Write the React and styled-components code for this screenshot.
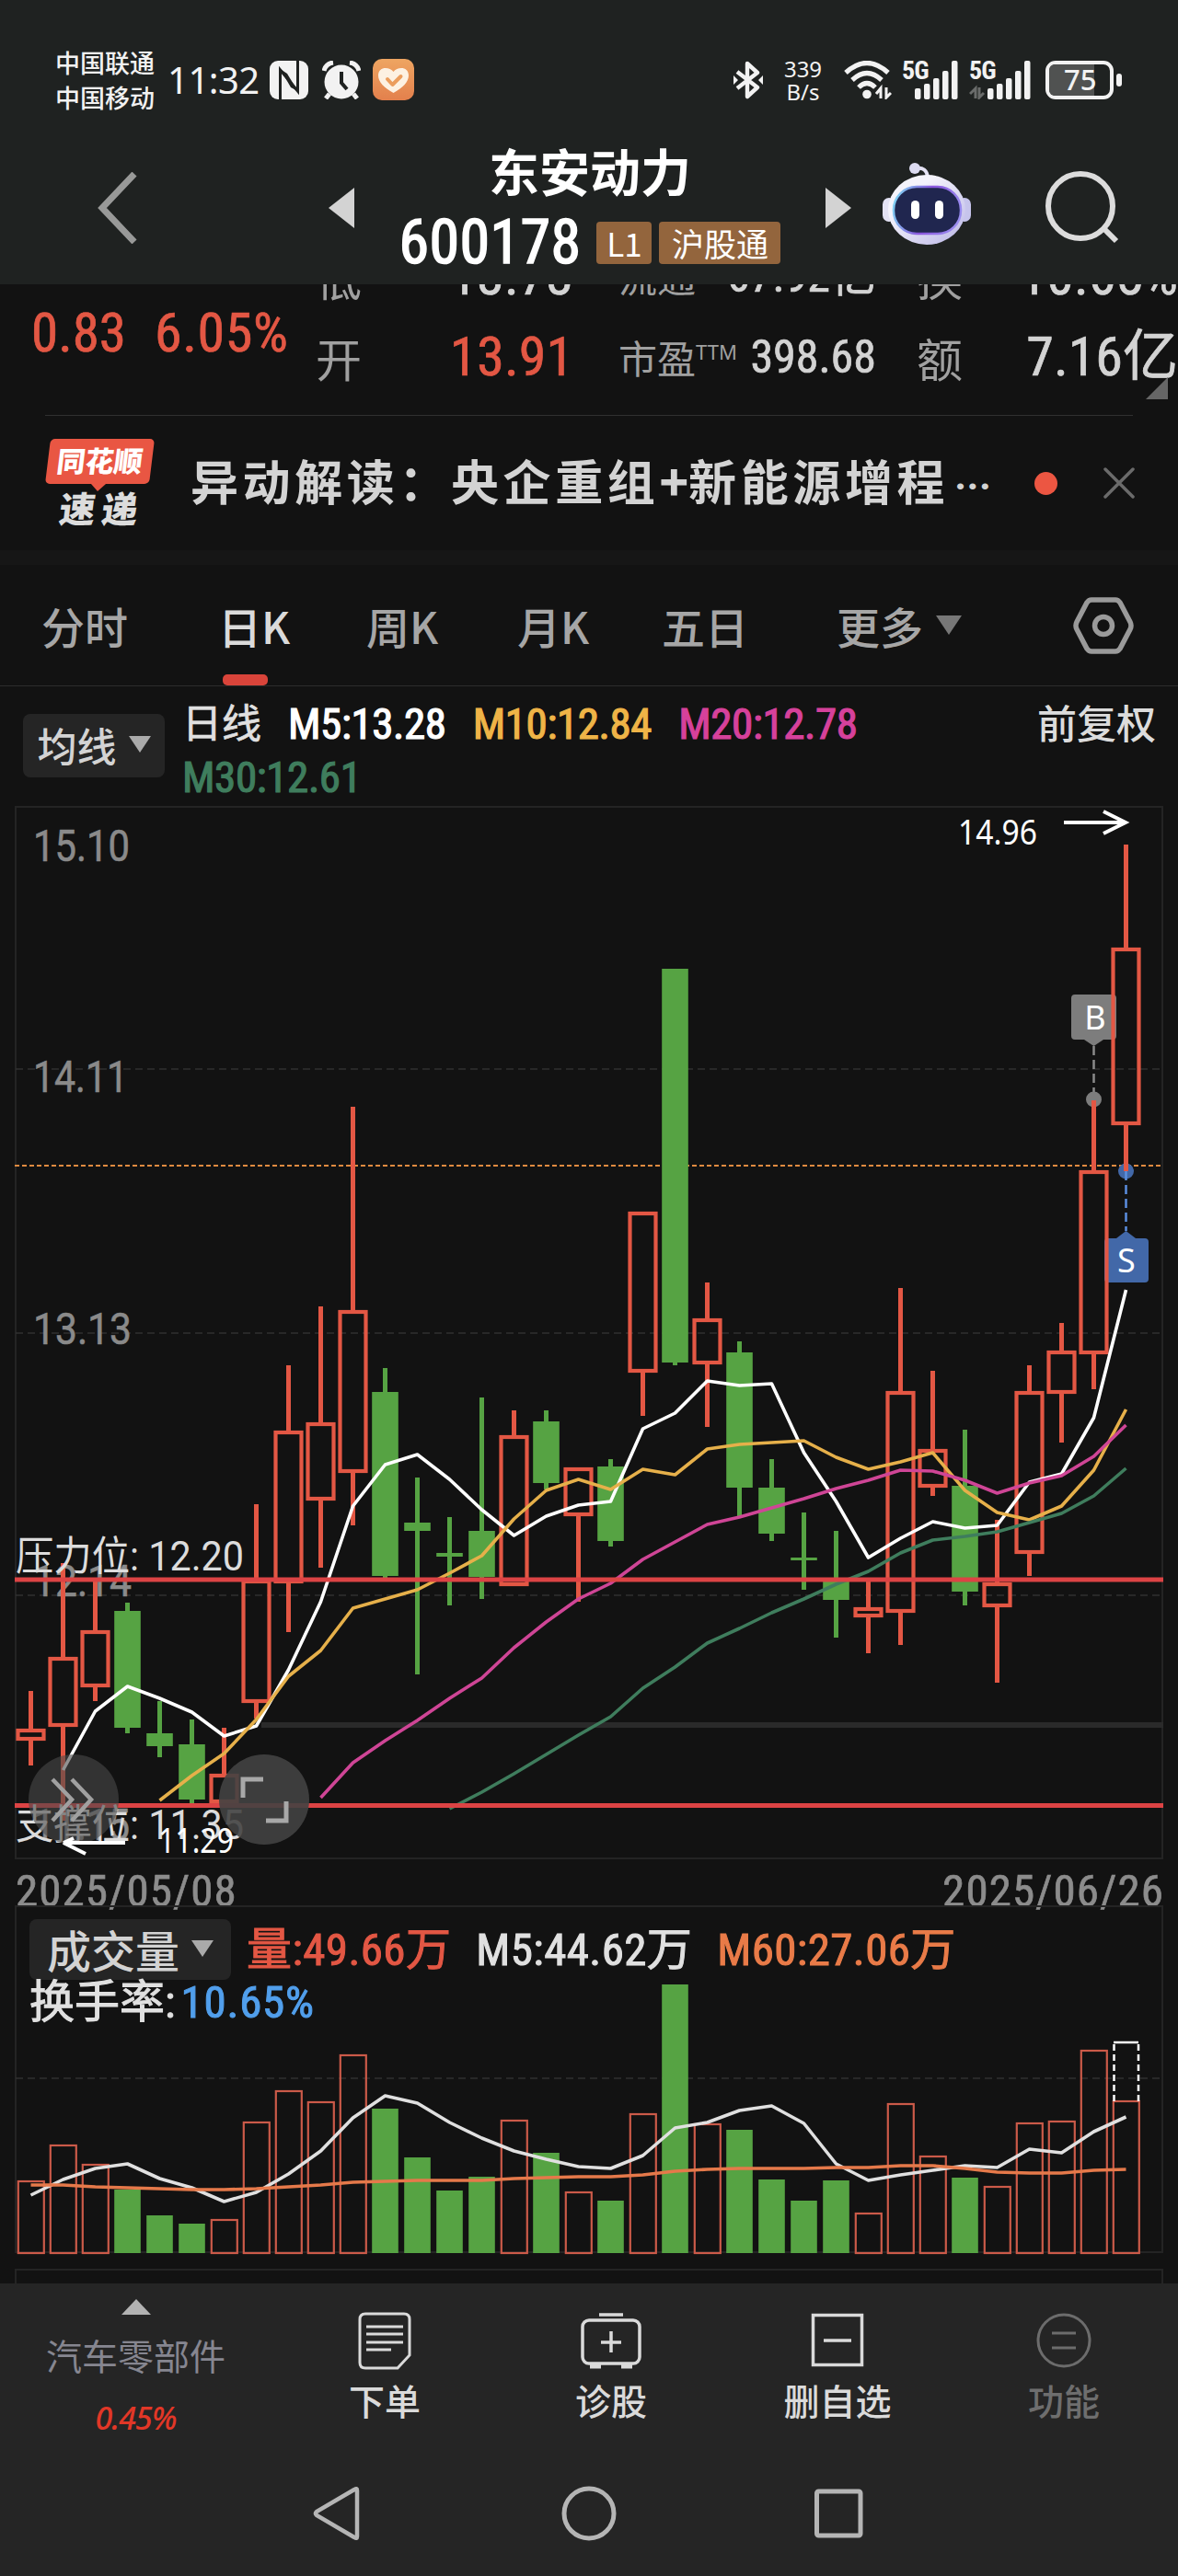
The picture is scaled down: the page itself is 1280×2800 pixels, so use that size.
import styled, { createGlobalStyle } from "styled-components"

const RED = "#e35744"
const GREEN = "#56a343"
const FIRST_X = 33.5
const STEP = 35

// [up, high, bodyTop, bodyBottom, low]
const candles = [
  [1, 1838, 1879, 1892, 1919],
  [1, 1699, 1801, 1877, 1979],
  [1, 1717, 1772, 1834, 1849],
  [0, 1742, 1751, 1878, 1884],
  [0, 1849, 1884, 1898, 1910],
  [0, 1869, 1896, 1956, 1961],
  [1, 1878, 1928, 1960, 1960],
  [1, 1635, 1717, 1851, 1868],
  [1, 1484, 1555, 1721, 1774],
  [1, 1420, 1546, 1631, 1704],
  [1, 1203, 1424, 1601, 1658],
  [0, 1487, 1513, 1713, 1715],
  [0, 1606, 1655, 1664, 1820],
  [0, 1649, 1688, 1692, 1745],
  [0, 1519, 1664, 1714, 1738],
  [1, 1533, 1560, 1724, 1724],
  [0, 1533, 1545, 1612, 1619],
  [1, 1595, 1595, 1648, 1741],
  [0, 1586, 1594, 1675, 1681],
  [1, 1317, 1317, 1492, 1539],
  [0, 1053, 1053, 1481, 1484],
  [1, 1394, 1433, 1483, 1551],
  [0, 1458, 1470, 1617, 1648],
  [0, 1586, 1617, 1667, 1675],
  [0, 1644, 1693, 1696, 1728],
  [0, 1664, 1718, 1739, 1780],
  [1, 1717, 1747, 1758, 1797],
  [1, 1400, 1512, 1753, 1788],
  [1, 1490, 1575, 1617, 1626],
  [0, 1554, 1615, 1730, 1745],
  [1, 1652, 1720, 1747, 1829],
  [1, 1484, 1512, 1689, 1713],
  [1, 1438, 1468, 1515, 1568],
  [1, 1196, 1272, 1472, 1510],
  [1, 918, 1030, 1223, 1273],
]

const ma5 = [1924, 1860, 1833, 1846, 1861, 1887, 1876, 1815, 1741, 1637, 1592, 1581, 1608, 1641, 1669, 1648, 1636, 1632, 1553, 1536, 1501, 1506, 1504, 1579, 1632, 1693, 1672, 1654, 1661, 1658, 1611, 1602, 1541, 1402]
const ma10 = [1957, 1930, 1906, 1869, 1822, 1794, 1748, 1738, 1728, 1710, 1691, 1651, 1620, 1608, 1619, 1597, 1603, 1575, 1570, 1568, 1566, 1584, 1597, 1589, 1579, 1620, 1644, 1652, 1637, 1598, 1532]
const ma20 = [1954, 1916, 1892, 1870, 1846, 1824, 1791, 1763, 1738, 1721, 1695, 1676, 1657, 1649, 1639, 1629, 1618, 1609, 1598, 1599, 1609, 1623, 1612, 1604, 1583, 1549]
const ma30 = [1966, 1948, 1928, 1907, 1886, 1866, 1835, 1812, 1786, 1770, 1753, 1738, 1722, 1708, 1688, 1674, 1670, 1665, 1655, 1645, 1626, 1596]

const volumes = [2370, 2331, 2352, 2380, 2408, 2417, 2412, 2306, 2272, 2284, 2233, 2292, 2345, 2381, 2366, 2304, 2340, 2382, 2392, 2297, 2157, 2308, 2315, 2369, 2392, 2370, 2405, 2286, 2343, 2367, 2376, 2307, 2305, 2228, 2283]
const vol5 = [2386, 2369, 2357, 2352, 2368, 2378, 2393, 2383, 2363, 2338, 2302, 2278, 2286, 2307, 2324, 2338, 2347, 2355, 2357, 2343, 2313, 2307, 2294, 2289, 2308, 2352, 2370, 2364, 2359, 2354, 2356, 2336, 2340, 2317, 2301]
const vol60 = [2375, 2375, 2377, 2378, 2379, 2380, 2380, 2379, 2377, 2375, 2372, 2371, 2370, 2370, 2370, 2368, 2367, 2366, 2366, 2364, 2360, 2358, 2357, 2357, 2357, 2356, 2356, 2354, 2354, 2357, 2361, 2362, 2362, 2359, 2358]

const xAt = (i) => FIRST_X + STEP * i
const linePoints = (values) =>
  values.map((y, i) => `${xAt(35 - values.length + i)},${y}`).join(" ")

function StatusBar() {
  return (
    <Status>
      <Carriers>
        <span>中国联通</span>
        <span>中国移动</span>
      </Carriers>
      <Clock>11:32</Clock>
      <svg width="42" height="42" viewBox="0 0 42 42">
        <rect width="42" height="42" rx="9" fill="#f2f2f2" />
        <path d="M11.500 42V10L30.500 33V0" fill="none" stroke="#1f2221" strokeWidth="3" />
        <path d="M11.500 9L19 14L30.500 33L23 29Z" fill="#1f2221" />
      </svg>
      <AlarmIcon width="42" height="42" viewBox="0 0 42 42">
        <circle cx="21" cy="23" r="18.500" fill="#f2f2f2" />
        <path d="M2 11Q4 3 12 2M40 11Q38 3 30 2" fill="none" stroke="#f2f2f2" strokeWidth="5" />
        <path d="M8 36L4 41M34 36L38 41" stroke="#f2f2f2" strokeWidth="5" />
        <path d="M21 12V24L27 31" fill="none" stroke="#1f2221" strokeWidth="4" />
      </AlarmIcon>
      <svg width="45" height="45" viewBox="0 0 45 45">
        <defs>
          <linearGradient id="heart" x1="0" y1="0" x2="0" y2="1">
            <stop offset="0" stopColor="#eea562" />
            <stop offset="1" stopColor="#e3804c" />
          </linearGradient>
        </defs>
        <rect width="45" height="45" rx="10" fill="url(#heart)" />
        <path d="M22.500 37C12 31 6 25 6 18C6 8 18 8 22.500 14C27 8 39 8 39 18C39 25 33 31 22.500 37Z" fill="#fdf1e2" />
        <path d="M16 22L21.500 28L30.500 19" fill="none" stroke="#eb9d5d" strokeWidth="4" strokeLinecap="round" strokeLinejoin="round" />
      </svg>
      <Spacer />
      <svg width="32" height="42" viewBox="0 0 32 42">
        <path d="M4 12L26 29L15 39V3L26 13L4 30" fill="none" stroke="#f2f2f2" strokeWidth="4.400" strokeLinejoin="round" />
        <path d="M0 16L5 21L0 26ZM32 16L27 21L32 26Z" fill="#f2f2f2" />
      </svg>
      <NetSpeed>
        <span>339</span>
        <span>B/s</span>
      </NetSpeed>
      <svg width="52" height="42" viewBox="0 0 52 42">
        <path d="M2 13Q25 -8 48 13M9 21Q25 6 41 21M16 29Q25 20 34 29" fill="none" stroke="#f2f2f2" strokeWidth="5.200" />
        <circle cx="25" cy="36.500" r="4.800" fill="#f2f2f2" />
        <path d="M40 41V30L35 36M46 29V40L51 35" fill="none" stroke="#f2f2f2" strokeWidth="3" />
      </svg>
      <SignalBars />
      <SignalBars idle />
      <Battery>
        <i />
        <b>75</b>
      </Battery>
    </Status>
  )
}

function SignalBars({ idle }) {
  return (
    <Signal>
      <span>5G</span>
      <svg width={idle ? 68 : 62} height="42" viewBox={idle ? "-6 0 68 42" : "0 0 62 42"}>
        {[0, 1, 2, 3, 4].map((i) => (
          <rect key={i} x={14 + i * 10} y={[30, 25, 19, 11, 0][i]} width="6.500" height={[12, 17, 23, 31, 42][i]} rx="2" fill="#f2f2f2" />
        ))}
        {idle && <path d="M1 41V30L-5 36M5 29V40L10 35" fill="none" stroke="#6a6c6b" strokeWidth="3" />}
      </svg>
    </Signal>
  )
}

function TitleBar() {
  return (
    <Title>
      <svg width="44" height="78" viewBox="0 0 44 78">
        <path d="M40 2L5 39L40 76" fill="none" stroke="#989998" strokeWidth="7" />
      </svg>
      <PrevArrow width="28" height="44" viewBox="0 0 28 44">
        <path d="M28 0V44L0 22Z" fill="#d3d3d3" />
      </PrevArrow>
      <StockName>
        <h1>东安动力</h1>
        <StockCode>
          <Num $size={66} $color="#fff" $bold={1.6} $gap={0.4}>600178</Num>
          <Badge>L1</Badge>
          <Badge $wide>沪股通</Badge>
        </StockCode>
      </StockName>
      <svg width="28" height="44" viewBox="0 0 28 44">
        <path d="M0 0V44L28 22Z" fill="#d3d3d3" />
      </svg>
      <Robot width="96" height="90" viewBox="0 0 96 90">
        <defs>
          <linearGradient id="head" x1="0" y1="0" x2="1" y2="1">
            <stop offset="0.300" stopColor="#f4f3fb" />
            <stop offset="1" stopColor="#b9b5e6" />
          </linearGradient>
          <linearGradient id="rim" x1="0" y1="0.300" x2="1" y2="0.500">
            <stop offset="0" stopColor="#7fd0f2" />
            <stop offset="0.500" stopColor="#8a55dd" />
            <stop offset="1" stopColor="#9a8df0" />
          </linearGradient>
        </defs>
        <path d="M36 6Q48 4 49 16" fill="none" stroke="#e4e2f4" strokeWidth="4" />
        <circle cx="35" cy="6" r="6" fill="#dddcf2" />
        <rect x="0" y="38" width="14" height="26" rx="7" fill="#e3e2f4" />
        <rect x="82" y="38" width="14" height="26" rx="7" fill="#c6c4ec" />
        <ellipse cx="48" cy="51" rx="42" ry="38" fill="url(#head)" />
        <rect x="12" y="26" width="73" height="51" rx="25" fill="#20264f" stroke="url(#rim)" strokeWidth="2.500" />
        <rect x="31" y="41" width="9" height="20" rx="4.500" fill="#fff" />
        <rect x="57" y="41" width="9" height="20" rx="4.500" fill="#fff" />
      </Robot>
      <svg width="82" height="82" viewBox="0 0 82 82">
        <circle cx="39" cy="39" r="35" fill="none" stroke="#dcdcdc" strokeWidth="6" />
        <path d="M64 63L78 77" stroke="#dcdcdc" strokeWidth="6" />
      </svg>
    </Title>
  )
}

function Quote() {
  return (
    <QuoteStrip>
      <Change>
        <Num $size={59} $color={RED}>0.83</Num>
        <Num $size={60} $color={RED} $gap={0.6}>6.05%</Num>
      </Change>
      <QuoteGrid>
        <Label>低</Label>
        <Num $size={60} $color="#d3d3d3">13.73</Num>
        <Label $small>流通</Label>
        <Num $size={50} $color="#d3d3d3">67.92亿</Num>
        <Label>换</Label>
        <Num $size={60} $color="#d3d3d3">10.65%</Num>
        <Label>开</Label>
        <Num $size={60} $color={RED}>13.91</Num>
        <Label $small>市盈<sup>TTM</sup></Label>
        <Num $size={50} $color="#d3d3d3">398.68</Num>
        <Label>额</Label>
        <Num $size={60} $color="#d3d3d3">7.16亿</Num>
      </QuoteGrid>
      <Corner />
    </QuoteStrip>
  )
}

function News() {
  return (
    <NewsRow>
      <NewsLogo>
        <LogoTop>同花顺</LogoTop>
        <LogoBottom>速递</LogoBottom>
      </NewsLogo>
      <Headline>异动解读：央企重组<b>+</b>新能源增程<small>···</small></Headline>
      <RedDot />
      <svg width="34" height="34" viewBox="0 0 34 34">
        <path d="M2 2L32 32M32 2L2 32" stroke="#6b6b6b" strokeWidth="3.500" strokeLinecap="round" />
      </svg>
    </NewsRow>
  )
}

function Periods() {
  return (
    <Tabs>
      <Tab $w={192}>分时</Tab>
      <Tab $w={161} $active>日K</Tab>
      <Tab $w={164}>周K</Tab>
      <Tab $w={157}>月K</Tab>
      <Tab $w={190}>五日</Tab>
      <Tab $w={257}>更多<Caret $size={14} $color="#777" /></Tab>
      <svg width="66" height="62" viewBox="0 0 66 62">
        <path d="M20 3H46Q49 3 51 6L62 27Q64 31 62 35L51 56Q49 59 46 59H20Q17 59 15 56L4 35Q2 31 4 27L15 6Q17 3 20 3Z" fill="none" stroke="#9a9a9a" strokeWidth="5.500" />
        <circle cx="33" cy="31" r="9.500" fill="none" stroke="#9a9a9a" strokeWidth="5.500" />
      </svg>
    </Tabs>
  )
}

function Averages() {
  return (
    <AverageRow>
      <Picker $w={154} $h={69}>均线<Caret $size={12} $color="#aaa" /></Picker>
      <AverageList>
        <Num $size={46} $color="#e0e0e0"><small>日线</small></Num>
        <Num $size={47} $color="#fff" $bold={1.2} $gap={-0.4}>M5:13.28</Num>
        <Num $size={47} $color="#efb447" $bold={1.2} $gap={-0.4}>M10:12.84</Num>
        <Num $size={47} $color="#d6419b" $bold={1.2} $gap={-0.4}>M20:12.78</Num>
        <Num $size={47} $color="#3f7d5d" $bold={1.2} $gap={-0.4}>M30:12.61</Num>
      </AverageList>
      <Adjust>前复权</Adjust>
    </AverageRow>
  )
}

function PriceChart() {
  return (
    <svg width="1280" height="1149" viewBox="0 875 1280 1149">
      <rect x="17" y="877" width="1246" height="1143" fill="none" stroke="#242424" strokeWidth="2" />
      {[1162, 1449, 1734].map((y) => (
        <path key={y} d={`M17 ${y}H1263`} stroke="#303030" strokeWidth="1.500" strokeDasharray="8 5" />
      ))}
      <path d="M284 1875H1264" stroke="#2a2a2a" strokeWidth="6" />
      <path d="M16 1267H1264" stroke="#e08a40" strokeWidth="2" strokeDasharray="5 3" />

      <AxisText x="36" y="936" textLength="105">15.10</AxisText>
      <AxisText x="36" y="1187" textLength="103">14.11</AxisText>
      <AxisText x="36" y="1461" textLength="107">13.13</AxisText>
      <AxisText x="36" y="1735" textLength="107">12.14</AxisText>
      <AxisText x="36" y="2000" textLength="105">11.15</AxisText>

      <path d="M1188.500 1137V1195" stroke="#8a8a8a" strokeWidth="2.500" strokeDasharray="10 5" />
      <path d="M1168 1081H1209Q1213 1081 1213 1085V1126Q1213 1130 1209 1130H1199L1188.500 1137L1178 1130H1168Q1164 1130 1164 1126V1085Q1164 1081 1168 1081Z" fill="#7d7d7d" />
      <circle cx="1188.500" cy="1195" r="8.500" fill="#7d7d7d" />
      <circle cx="1223.500" cy="1273" r="8.500" fill="#4268a8" />
      <path d="M1204 1346H1213L1223.500 1338L1234 1346H1244Q1248 1346 1248 1350V1390Q1248 1394 1244 1394H1204Q1200 1394 1200 1390V1350Q1200 1346 1204 1346Z" fill="#4268a8" />
      <PinText x="1190" y="1119">B</PinText>
      <PinText x="1224" y="1383">S</PinText>

      {candles.map(([up, high, top, bottom, low], i) => {
        const x = xAt(i)
        return up ? (
          <g key={i} stroke={RED}>
            <path d={`M${x} ${high}V${top}M${x} ${bottom}V${low}`} strokeWidth="5" />
            <rect x={x - 14} y={top + 2} width="28" height={bottom - top - 4} fill="none" strokeWidth="4.200" />
          </g>
        ) : (
          <g key={i} fill={GREEN}>
            <rect x={x - 2.5} y={high} width="5" height={low - high} />
            <rect x={x - 14.3} y={top} width="28.600" height={bottom - top} />
          </g>
        )
      })}
      <path d="M1223.500 1273V1338" stroke="#5b8ee0" strokeWidth="2.500" strokeDasharray="10 5" />

      <Line points={linePoints(ma5)} stroke="#fff" />
      <Line points={linePoints(ma10)} stroke="#e6b04a" />
      <Line points={linePoints(ma20)} stroke="#cf4596" />
      <Line points={linePoints(ma30)} stroke="#3f7d5d" />

      <path d="M16 1717H1264M16 1962.500H1264" stroke="#dc4344" strokeWidth="5" />
      <LevelText x="17" y="1707" textLength="248">压力位: 12.20</LevelText>
      <LevelText x="17" y="1999" textLength="248">支撑位: 11.35</LevelText>

      <circle cx="80" cy="1956" r="49" fill="#4a4a4a" fillOpacity="0.600" />
      <circle cx="287" cy="1956" r="49" fill="#424242" fillOpacity="0.900" />
      <path d="M57 1934L78 1956L57 1979M78 1934L99 1956L78 1979" fill="none" stroke="#a0a0a0" strokeWidth="4.500" />
      <path d="M264 1954V1934H286M311 1958V1979H289" fill="none" stroke="#a8a8a8" strokeWidth="5" />

      <HandText x="172" y="2014" textLength="82">11.29</HandText>
      <path d="M136 2003H69L93 2015M69 2003L80 1998" fill="none" stroke="#fff" strokeWidth="4" />
      <HandText x="1041" y="918" textLength="86">14.96</HandText>
      <path d="M1156 894H1223M1199 882L1223 894L1199 906" fill="none" stroke="#fff" strokeWidth="4" />
    </svg>
  )
}

function VolumePanel() {
  return (
    <VolumeBox>
      <VolumeSvg width="1280" height="411" viewBox="0 2071 1280 411">
        <path d="M17 2448V2072H1263V2448ZM17 2482V2467H1263V2482" fill="none" stroke="#242424" strokeWidth="2" />
        <path d="M17 2259H1263" stroke="#303030" strokeWidth="1.500" strokeDasharray="8 5" />
        {volumes.map((top, i) =>
          candles[i][0] ? (
            <rect key={i} x={xAt(i) - 13.7} y={top + 1} width="28" height={2448 - top} fill="none" stroke="#cb5a49" strokeWidth="2.200" />
          ) : (
            <rect key={i} x={xAt(i) - 14.3} y={top} width="28.600" height={2449 - top} fill={GREEN} />
          )
        )}
        <path d="M1210.500 2284V2220M1237 2284V2220" fill="none" stroke="#fff" strokeWidth="2.500" strokeDasharray="7 4" />
        <path d="M1210 2220H1237" stroke="#fff" strokeWidth="2.500" />
        <Line points={linePoints(vol5)} stroke="#e0e0e0" />
        <Line points={linePoints(vol60)} stroke="#e5794a" />
      </VolumeSvg>
      <VolumeLegend>
        <Picker $w={219} $h={66} $size={48}>成交量<Caret $size={12} $color="#aaa" /></Picker>
        <Num $size={49} $color={RED} $bold={1} $gap={0.4}>量:49.66万</Num>
        <Num $size={49} $color="#e0e0e0" $bold={1} $gap={0.4}>M5:44.62万</Num>
        <Num $size={49} $color="#e97b48" $bold={1} $gap={0.4}>M60:27.06万</Num>
      </VolumeLegend>
      <Turnover>
        <Num $size={49} $color="#e0e0e0" $bold={1}>换手率:</Num>
        <Num $size={49} $color="#519fec" $bold={1} $gap={0.8}>10.65%</Num>
      </Turnover>
    </VolumeBox>
  )
}

function BottomBar() {
  return (
    <Bottom>
      <Actions>
        <Sector>
          <svg width="32" height="17" viewBox="0 0 32 17">
            <path d="M0 17L16 0L32 17Z" fill="#b2b2b2" />
          </svg>
          <span>汽车零部件</span>
          <em>0.45%</em>
        </Sector>
        <Action>
          <svg width="66" height="64" viewBox="-33 -32 66 64" fill="none" stroke="#dadada" strokeWidth="3">
            <path d="M-21 -29H21Q27 -29 27 -23V16L14 30H-21Q-27 30 -27 24V-23Q-27 -29 -21 -29Z" />
            <path d="M-20 -15H20M-20 -7H20M-20 2H20M-20 10H7" />
          </svg>
          下单
        </Action>
        <Action>
          <svg width="66" height="64" viewBox="-33 -32 66 64" fill="none" stroke="#dadada" strokeWidth="3.500">
            <rect x="-31" y="-22" width="62" height="47" rx="7" />
            <path d="M-13 -28H13M-11 2H11M0 -10V13" />
            <path d="M-23 28H-11M11 28H23" strokeWidth="5" />
          </svg>
          诊股
        </Action>
        <Action>
          <svg width="66" height="64" viewBox="-33 -32 66 64" fill="none" stroke="#dadada" strokeWidth="3.500">
            <rect x="-26.500" y="-27.500" width="53" height="54" />
            <path d="M-15 0H15" />
          </svg>
          删自选
        </Action>
        <Action $dim>
          <svg width="66" height="64" viewBox="-33 -32 66 64" fill="none" stroke="#6c6c6c" strokeWidth="3">
            <circle r="28" />
            <path d="M-13 -8H13M-13 8H13" />
          </svg>
          功能
        </Action>
      </Actions>
      <SystemNav>
        <svg width="60" height="60" viewBox="0 0 60 60">
          <path d="M49 5V55Q49 58 46 56L5 32Q3 30 5 28L46 4Q49 2 49 5Z" fill="none" stroke="#b5b5b5" strokeWidth="4.500" />
        </svg>
        <svg width="60" height="60" viewBox="0 0 60 60">
          <circle cx="30" cy="30" r="27" fill="none" stroke="#b5b5b5" strokeWidth="5" />
        </svg>
        <svg width="60" height="60" viewBox="0 0 60 60">
          <rect x="6.500" y="6" width="47.500" height="48" rx="2" fill="none" stroke="#b5b5b5" strokeWidth="5" />
        </svg>
      </SystemNav>
    </Bottom>
  )
}

export default function App() {
  return (
    <Phone>
      <GlobalStyle />
      <Header>
        <StatusBar />
        <TitleBar />
      </Header>
      <Quote />
      <News />
      <Periods />
      <Averages />
      <PriceChart />
      <Dates>
        <Num $size={49} $color="#8c8c8c" $gap={1.1}>2025/05/08</Num>
        <Num $size={49} $color="#8c8c8c" $gap={1.1}>2025/06/26</Num>
      </Dates>
      <VolumePanel />
      <BottomBar />
    </Phone>
  )
}

const GlobalStyle = createGlobalStyle`
* {
    box-sizing: border-box;
}
body {
    margin: 0;
    background: #121212;
    font-family: "Noto Sans CJK SC", sans-serif;
}
svg {
    display: block;
    flex-shrink: 0;
}
`

const Phone = styled.div`
width: 1280px;
height: 2800px;
display: flex;
flex-direction: column;
overflow: hidden;
background: #121212;
`

const Num = styled.span`
font-family: Roboto, "Noto Sans CJK SC", sans-serif;
font-stretch: 86%;
font-size: ${p => p.$size}px;
font-weight: 400;
letter-spacing: ${p => p.$gap || 0}px;
color: ${p => p.$color};
-webkit-text-stroke: ${p => p.$bold || 0.7}px ${p => p.$color};
line-height: 1;
white-space: nowrap;
small {
    font-size: 43px;
}
`

const Caret = styled.i`
border-left: ${p => p.$size}px solid transparent;
border-right: ${p => p.$size}px solid transparent;
border-top: ${p => p.$size * 1.5}px solid ${p => p.$color};
`

const Header = styled.header`
height: 309px;
flex-shrink: 0;
background: #1f2221;
`

const Status = styled.div`
height: 145px;
padding: 28px 61px 0 60px;
display: flex;
align-items: center;
`

const Carriers = styled.div`
width: 122px;
display: flex;
flex-direction: column;
font-size: 27px;
font-weight: 500;
line-height: 38px;
color: #f2f2f2;
`

const Clock = styled.span`
width: 111px;
font-family: "Noto Sans", sans-serif;
font-size: 40px;
letter-spacing: -0.5px;
line-height: 1;
color: #f2f2f2;
`

const AlarmIcon = styled.svg`
margin: 0 13px 0 15px;
`

const Spacer = styled.div`
flex: 1;
`

const NetSpeed = styled.div`
width: 43px;
margin: 0 23px 0 22px;
display: flex;
flex-direction: column;
align-items: center;
font-family: "Noto Sans", sans-serif;
font-size: 24px;
line-height: 25px;
color: #f2f2f2;
`

const Signal = styled.div`
position: relative;
margin-left: 11px;
span {
    position: absolute;
    left: 0;
    top: -1px;
    font-family: Roboto, sans-serif;
    font-stretch: 75%;
    font-size: 28px;
    font-weight: 700;
    line-height: 24px;
    letter-spacing: -1px;
    color: #f2f2f2;
}
`

const Battery = styled.div`
position: relative;
width: 74px;
height: 42px;
margin: 0 9px 0 15px;
border: 4px solid #f2f2f2;
border-radius: 11px;
display: flex;
i {
    width: 49px;
    border-radius: 6px 0 0 6px;
    background: #505251;
}
b {
    position: absolute;
    left: 16px;
    top: 1px;
    font-size: 31px;
    font-weight: 500;
    font-family: "Noto Sans", sans-serif;
    line-height: 31px;
    color: #f2f2f2;
}
&::after {
    content: "";
    position: absolute;
    right: -13px;
    top: 10px;
    width: 6px;
    height: 14px;
    border-radius: 3px;
    background: #f2f2f2;
}
`

const Title = styled.div`
height: 161px;
padding: 0 60px 0 106px;
display: flex;
align-items: center;
`

const PrevArrow = styled.svg`
margin-left: 207px;
`

const Robot = styled.svg`
margin: 0 80px 8px 34px;
`

const StockName = styled.div`
width: 512px;
display: flex;
flex-direction: column;
align-items: center;
h1 {
    margin: 0;
    font-size: 55px;
    line-height: 76px;
    font-weight: 700;
    color: #fff;
}
`

const StockCode = styled.div`
display: flex;
align-items: center;
height: 84px;
`

const Badge = styled.span`
width: ${p => (p.$wide ? 132 : 60)}px;
height: 46px;
margin-left: ${p => (p.$wide ? 8 : 17)}px;
border-radius: 4px;
background: #93653d;
color: #fff;
font-size: 35px;
line-height: 46px;
text-align: center;
`

const QuoteStrip = styled.section`
position: relative;
height: 143px;
flex-shrink: 0;
overflow: hidden;
display: flex;
&::after {
    content: "";
    position: absolute;
    left: 49px;
    right: 49px;
    bottom: 0;
    height: 1px;
    background: #303030;
}
`

const Change = styled.div`
width: 340px;
padding: 23px 0 0 34px;
display: flex;
gap: 31px;
`

const QuoteGrid = styled.div`
width: 940px;
display: grid;
grid-template-columns: 100px 183px 196px 133px 102px 226px;
grid-auto-rows: 88px;
align-items: center;
margin-top: -53px;
${Num} {
    justify-self: end;
}
`

const Label = styled.span`
padding-left: ${p => (p.$small ? 49 : 3)}px;
&:nth-child(6n + 5) {
    padding-left: 44px;
}
font-size: ${p => (p.$small ? 42 : 50)}px;
line-height: 1;
white-space: nowrap;
color: #a0a0a0;
sup {
    font-family: "Noto Sans", sans-serif;
    font-size: 22px;
    line-height: 0;
}
`

const Corner = styled.i`
position: absolute;
right: 11px;
bottom: 18px;
border-left: 24px solid transparent;
border-bottom: 24px solid #666;
`

const NewsRow = styled.section`
height: 162px;
flex-shrink: 0;
padding: 0 46px 0 52px;
border-bottom: 16px solid #161616;
display: flex;
align-items: center;
`

const NewsLogo = styled.div`
width: 113px;
height: 97px;
flex-shrink: 0;
margin-right: 42px;
`

const LogoTop = styled.div`
position: relative;
height: 49px;
transform: skewX(-7deg);
border-radius: 5px;
background: #e95643;
color: #fff;
font-size: 31px;
font-weight: 900;
line-height: 46px;
text-align: center;
white-space: nowrap;
&::after {
    content: "";
    position: absolute;
    left: 49px;
    top: 48px;
    border: 9px solid transparent;
    border-top-color: #e95643;
}
`

const LogoBottom = styled.div`
transform: skewX(-7deg);
padding-left: 13px;
font-size: 39px;
font-weight: 900;
line-height: 51px;
letter-spacing: 7px;
white-space: nowrap;
color: #dcdcdc;
`

const Headline = styled.span`
width: 917px;
flex-shrink: 0;
font-size: 52px;
font-weight: 700;
line-height: 1;
margin-top: -4px;
letter-spacing: 4.6px;
white-space: nowrap;
color: #d3d3d3;
b {
    letter-spacing: 0;
}
small {
    font-family: Roboto, sans-serif;
    font-size: 44px;
    letter-spacing: 0;
    margin-left: 6px;
}
`

const RedDot = styled.i`
width: 25px;
height: 25px;
flex-shrink: 0;
margin-right: 50px;
border-radius: 50%;
background: #ec5642;
`

const Tabs = styled.nav`
height: 132px;
flex-shrink: 0;
border-bottom: 1px solid #2c2c2c;
display: flex;
align-items: center;
padding-left: 45px;
`

const Tab = styled.span`
position: relative;
width: ${p => p.$w}px;
display: flex;
align-items: center;
gap: 14px;
font-size: 47px;
font-weight: 500;
line-height: 129px;
color: ${p => (p.$active ? "#dadada" : "#a6a6a6")};
&::after {
    content: "";
    display: ${p => (p.$active ? "block" : "none")};
    position: absolute;
    left: 5px;
    bottom: -1px;
    width: 49px;
    height: 12px;
    border-radius: 5px;
    background: #d9443a;
}
`

const AverageRow = styled.section`
height: 129px;
flex-shrink: 0;
padding: 0 24px 0 25px;
display: flex;
`

const Picker = styled.div`
width: ${p => p.$w}px;
height: ${p => p.$h}px;
flex-shrink: 0;
margin-top: ${p => (p.$size ? 0 : 30)}px;
padding-bottom: 3px;
border-radius: 8px;
background: #252525;
display: flex;
align-items: center;
justify-content: center;
gap: 13px;
font-size: ${p => p.$size || 43}px;
font-weight: 500;
line-height: 1;
color: #d3d3d3;
`

const AverageList = styled.div`
width: 790px;
padding: 12px 0 0 19px;
display: flex;
flex-wrap: wrap;
align-content: flex-start;
column-gap: 29px;
${Num} {
    line-height: 57px;
}
`

const Adjust = styled.span`
margin-left: auto;
font-size: 43px;
font-weight: 500;
line-height: 76px;
color: #dcdcdc;
`

const AxisText = styled.text.attrs({ lengthAdjust: "spacingAndGlyphs" })`
font-family: Roboto, sans-serif;
font-size: 48px;
fill: #8a8a8a;
stroke: #8a8a8a;
stroke-width: 0.6px;
`

const LevelText = styled(AxisText)`
font-family: Roboto, "Noto Sans CJK SC", sans-serif;
font-size: 44px;
fill: #dcdcdc;
stroke: none;
`

const HandText = styled(AxisText)`
font-family: "Noto Sans", sans-serif;
font-size: 39px;
fill: #fff;
stroke: none;
`

const PinText = styled.text`
font-family: "Noto Sans", sans-serif;
font-size: 36px;
text-anchor: middle;
fill: #fff;
`

const Line = styled.polyline`
fill: none;
stroke-width: 3.6px;
stroke-linejoin: round;
`

const Dates = styled.div`
height: 47px;
flex-shrink: 0;
padding: 7px 15px 0 17px;
display: flex;
justify-content: space-between;
`

const VolumeBox = styled.section`
position: relative;
height: 411px;
flex-shrink: 0;
padding: 15px 0 0 32px;
`

const VolumeSvg = styled.svg`
position: absolute;
left: 0;
top: 0;
`

const VolumeLegend = styled.div`
position: relative;
display: flex;
align-items: center;
${Num} {
    margin-left: 17px;
}
${Num} + ${Num} {
    margin-left: 27px;
}
`

const Turnover = styled.div`
position: relative;
display: flex;
align-items: center;
height: 48px;
gap: 6px;
`

const Bottom = styled.footer`
height: 318px;
flex-shrink: 0;
background: #252525;
`

const Actions = styled.div`
height: 190px;
display: flex;
`

const Action = styled.div`
width: 246px;
padding-top: 30px;
display: flex;
flex-direction: column;
align-items: center;
font-size: 39px;
font-weight: 500;
line-height: 64px;
color: ${p => (p.$dim ? "#6e6e6e" : "#dadada")};
`

const Sector = styled.div`
width: 295px;
padding-top: 17px;
display: flex;
flex-direction: column;
align-items: center;
font-size: 39px;
line-height: 86px;
color: #868690;
em {
    margin-top: -17px;
    font-family: "Noto Sans", sans-serif;
    font-size: 34px;
    letter-spacing: -1px;
    font-weight: 500;
    color: #e23727;
}
`

const SystemNav = styled.div`
height: 120px;
padding: 0 339px;
display: flex;
align-items: center;
justify-content: space-between;
`
